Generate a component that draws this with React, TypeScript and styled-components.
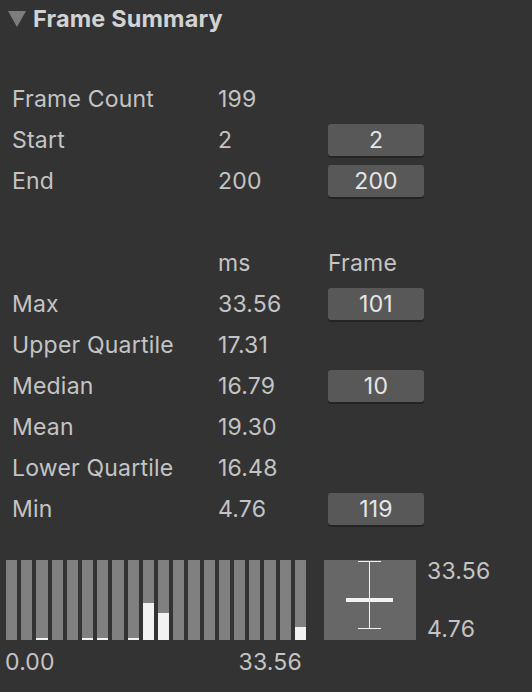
import React from "react";
import styled, { createGlobalStyle } from "styled-components";

const GlobalStyle = createGlobalStyle`
  html, body {
    margin: 0;
    padding: 0;
    background: #333333;
  }
  body {
    font-family: Inter, "Noto Sans", "Liberation Sans", sans-serif;
    color: #c4c4c4;
  }
`;

type Row = { label: string; value: string; frame?: string; head?: boolean };

const rows: (Row | null)[] = [
  { label: "Frame Count", value: "199" },
  { label: "Start", value: "2", frame: "2" },
  { label: "End", value: "200", frame: "200" },
  null,
  { label: "", value: "ms", frame: "Frame", head: true },
  { label: "Max", value: "33.56", frame: "101" },
  { label: "Upper Quartile", value: "17.31" },
  { label: "Median", value: "16.79", frame: "10" },
  { label: "Mean", value: "19.30" },
  { label: "Lower Quartile", value: "16.48" },
  { label: "Min", value: "4.76", frame: "119" },
];

// white fill height of each histogram bucket, in px of 80
const buckets = [0, 0, 2, 0, 0, 2, 2, 0, 2, 37, 27, 0, 0, 0, 0, 0, 0, 0, 0, 13];

const App = () => {
  return (
    <Page>
      <GlobalStyle />
      <Header>
        <Arrow viewBox="0 0 18 16">
          <polygon points="0,0 18,0 9,16" fill="#7d7d7d" />
        </Arrow>
        <Title>Frame Summary</Title>
      </Header>

      <Table>
        {rows.map((row, idx) =>
          row ? (
            <TableRow key={idx}>
              <Label>{row.label}</Label>
              <Label>{row.value}</Label>
              {row.head ? (
                <Label>{row.frame}</Label>
              ) : row.frame ? (
                <FrameButton>{row.frame}</FrameButton>
              ) : (
                <span />
              )}
            </TableRow>
          ) : (
            <TableRow key={idx} />
          )
        )}
      </Table>

      <Charts>
        <HistogramBlock>
          <Histogram>
            {buckets.map((h, idx) => (
              <Bar key={idx}>
                <Fill style={{ height: h }} />
              </Bar>
            ))}
          </Histogram>
          <AxisLabels>
            <span>0.00</span>
            <span>33.56</span>
          </AxisLabels>
        </HistogramBlock>

        <BoxPlot viewBox="0 0 92 80">
          <rect x="0" y="0" width="92" height="80" fill="#676767" />
          <line x1="45.5" y1="1" x2="45.5" y2="69" stroke="#f2f2f2" strokeWidth="1" />
          <line x1="34" y1="1.5" x2="57" y2="1.5" stroke="#f2f2f2" strokeWidth="1" />
          <line x1="34" y1="68.5" x2="57" y2="68.5" stroke="#f2f2f2" strokeWidth="1" />
          <rect x="22" y="38" width="47" height="4" fill="#f2f2f2" />
        </BoxPlot>

        <BoxLabels>
          <span>33.56</span>
          <span>4.76</span>
        </BoxLabels>
      </Charts>
    </Page>
  );
};

export default App;

const Page = styled.div`
  width: 532px;
  height: 692px;
  overflow: hidden;
  background: #333333;
`;

const Header = styled.div`
  display: flex;
  align-items: center;
  height: 38px;
  padding-left: 8px;
  gap: 7px;
`;

const Arrow = styled.svg`
  width: 18px;
  height: 16px;
`;

const Title = styled.div`
  color: #d2d2d2;
  font-size: 23.5px;
  font-weight: 700;
  letter-spacing: 0.15px;
  line-height: 38px;
`;

const Table = styled.div`
  margin-top: 41px;
  padding-left: 12px;
`;

const TableRow = styled.div`
  display: grid;
  grid-template-columns: 206px 110px 96px;
  align-items: center;
  height: 41px;
`;

const Label = styled.div`
  font-size: 23px;
  letter-spacing: 0.2px;
  line-height: 41px;
  white-space: nowrap;
`;

const FrameButton = styled.div`
  height: 32px;
  border-radius: 3px;
  background: #585858;
  box-shadow: 0 2px 0 #242424;
  color: #e6e6e6;
  font-size: 23px;
  letter-spacing: 0.2px;
  line-height: 32px;
  text-align: center;
  margin-top: -2px;
`;

const Charts = styled.div`
  display: flex;
  align-items: flex-start;
  margin-top: 30px;
  padding-left: 6px;
`;

const HistogramBlock = styled.div`
  display: flex;
  flex-direction: column;
  width: 300px;
`;

const Histogram = styled.div`
  display: flex;
  gap: 4px;
  height: 80px;
`;

const Bar = styled.div`
  flex: 1;
  display: flex;
  flex-direction: column;
  justify-content: flex-end;
  background: #808080;
`;

const Fill = styled.div`
  background: #f2f2f2;
`;

const AxisLabels = styled.div`
  display: flex;
  justify-content: space-between;
  margin-left: -1px;
  padding-right: 4px;
  font-size: 23px;
  letter-spacing: 0.2px;
  line-height: 44px;
`;

const BoxPlot = styled.svg`
  width: 92px;
  height: 80px;
  margin-left: 18px;
`;

const BoxLabels = styled.div`
  display: flex;
  flex-direction: column;
  justify-content: space-between;
  height: 80px;
  margin-left: 11px;
  font-size: 23px;
  letter-spacing: 0.2px;
  line-height: 22px;
`;
